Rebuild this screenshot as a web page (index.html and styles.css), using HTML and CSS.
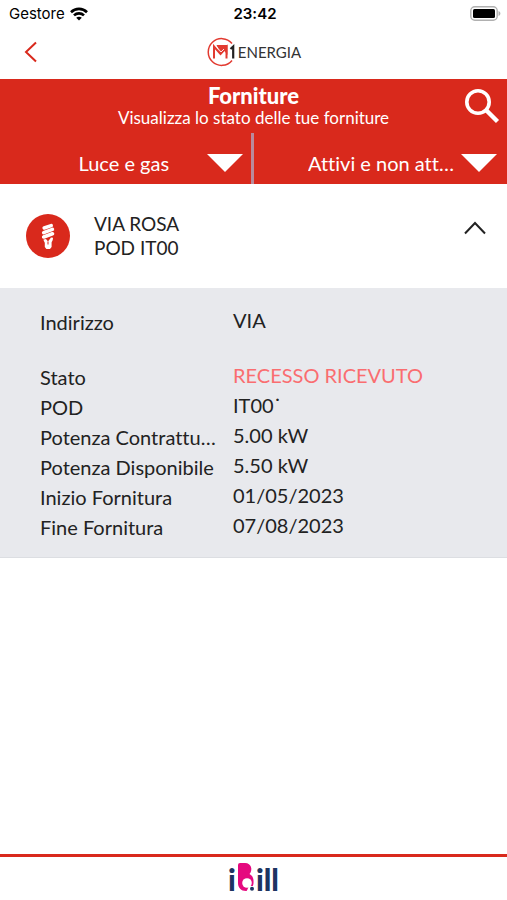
FILE: index.html
```html
<!DOCTYPE html>
<html lang="it">
<head>
    <meta charset="UTF-8">
    <meta name="viewport" content="width=device-width, initial-scale=1.0">
    <title>Forniture</title>
    <link rel="stylesheet" href="styles.css">
</head>
<body>
    <div class="status-bar">
        <div class="carrier">
            <span>Gestore</span>
            <svg width="18" height="14" viewBox="0 0 18 14" fill="none" stroke="#000" stroke-width="2.6">
                <path d="M1 5.2C5.5 0.8 12.5 0.8 17 5.2"/>
                <path d="M4 8.4C6.8 5.7 11.2 5.7 14 8.4"/>
                <path d="M9 13.6L6.2 10.8C7.8 9.4 10.2 9.4 11.8 10.8Z" fill="#000" stroke="none"/>
            </svg>
        </div>
        <div class="clock">23:42</div>
        <div class="battery">
            <svg width="31" height="15" viewBox="0 0 31 15">
                <rect x="0.8" y="0.8" width="26.4" height="13.4" rx="4" fill="#fff" stroke="#b0b0b0" stroke-width="1.4"/>
                <rect x="3" y="3" width="22" height="9" rx="1.5" fill="#000"/>
                <path d="M28.5 5C31 6 31 9 28.5 10Z" fill="#b0b0b0"/>
            </svg>
        </div>
    </div>

    <header class="navbar">
        <button class="back-button" aria-label="Indietro">
            <svg width="14" height="22" viewBox="0 0 14 22" fill="none" stroke="#d9291c" stroke-width="2">
                <path d="M12 1.5L2 11L12 20.5"/>
            </svg>
        </button>
        <div class="brand">
            <svg width="30" height="30" viewBox="0 0 30 30">
                <path d="M26 6.5A13.4 13.4 0 1 0 26 23.5" fill="none" stroke="#e23a30" stroke-width="1.5"/>
                <path d="M8 21.5V9.5L14.5 17L20.5 10V21.5" fill="none" stroke="#e23a30" stroke-width="2"/>
                <path d="M10.5 8H21.5V18L18.5 14L15 17.5Z" fill="#e23a30"/>
                <path d="M9.5 8.5L15 15L18 12" fill="none" stroke="#fff" stroke-width="0.9"/>
                <path d="M24.5 12L27.2 9.5V21.5" fill="none" stroke="#222" stroke-width="2.2"/>
            </svg>
            <span>ENERGIA</span>
        </div>
    </header>

    <section class="page-head">
        <div class="page-title">
            <h1>Forniture</h1>
            <p>Visualizza lo stato delle tue forniture</p>
            <button class="search-button" aria-label="Cerca">
                <svg width="36" height="36" viewBox="0 0 36 36" fill="none" stroke="#fff">
                    <circle cx="14" cy="14" r="11.2" stroke-width="3.6"/>
                    <path d="M22 22L33.5 33.5" stroke-width="4.4"/>
                </svg>
            </button>
        </div>
        <div class="filters">
            <div class="filter">
                <select aria-label="Tipo di fornitura">
                    <option>Luce e gas</option>
                    <option>Luce</option>
                    <option>Gas</option>
                </select>
                <span class="arrow"></span>
            </div>
            <div class="filter">
                <select aria-label="Stato della fornitura">
                    <option>Attivi e non attivi</option>
                    <option>Attivi</option>
                </select>
                <span class="arrow"></span>
            </div>
        </div>
    </section>

    <main>
        <div class="supply">
            <svg width="44" height="44" viewBox="0 0 44 44">
                <circle cx="22" cy="22" r="22" fill="#d9291c"/>
                <g stroke="#fff" stroke-width="3.6" stroke-linecap="round">
                    <path d="M18.2 14L25.2 11.6"/>
                    <path d="M17.7 18.6L26.4 15.4"/>
                    <path d="M17.7 23L26.4 19.8"/>
                </g>
                <path d="M17.5 25.5L20 25L22 27.5L25 23.6L27 23.8C27 27 25.6 27.5 25.6 29V33L24 35H20.4L18.8 33V29C18.8 28 17.5 27 17.5 25.5Z" fill="#fff"/>
                <path d="M22 27.5V30.5" stroke="#d9291c" stroke-width="1"/>
            </svg>
            <div class="supply-name">
                <div>VIA ROSA</div>
                <div>POD IT00</div>
            </div>
            <button class="toggle-button" aria-label="Chiudi dettagli" aria-expanded="true">
                <svg width="22" height="14" viewBox="0 0 22 14" fill="none" stroke="#222" stroke-width="2">
                    <path d="M1 12.5L11 2L21 12.5"/>
                </svg>
            </button>
        </div>

        <table class="details">
            <tr class="address"><th scope="row">Indirizzo</th><td>VIA</td></tr>
            <tr><th scope="row">Stato</th><td class="withdrawn">RECESSO RICEVUTO</td></tr>
            <tr><th scope="row">POD</th><td>IT00˙</td></tr>
            <tr><th scope="row">Potenza Contrattuale</th><td>5.00 kW</td></tr>
            <tr><th scope="row">Potenza Disponibile</th><td>5.50 kW</td></tr>
            <tr><th scope="row">Inizio Fornitura</th><td>01/05/2023</td></tr>
            <tr><th scope="row">Fine Fornitura</th><td>07/08/2023</td></tr>
        </table>
    </main>

    <footer class="footer">
        <div class="ibill">
            <span>i</span>
            <svg width="18" height="29" viewBox="0 0 18 29">
                <path d="M1 2Q1 0 3 0H8C14.5 0 16 7 12.5 11C15.5 12.5 17 15.5 16.5 20.5C16 25 13 28 9 28C4 28 1 24.5 1 20Z" fill="#e5097f"/>
                <circle cx="10" cy="20" r="4.8" fill="#fff"/>
                <path d="M9.5 28.5L12 23H18V29Z" fill="#fff"/>
                <circle cx="15" cy="25.8" r="2" fill="#1d3461"/>
            </svg>
            <span>ill</span>
        </div>
    </footer>
</body>
</html>
```
FILE: styles.css
```css
* {
    box-sizing: border-box;
}

body {
    margin: 0;
    min-height: 100vh;
    display: flex;
    flex-direction: column;
    background: #fff;
    color: #222;
    font-family: Lato, sans-serif;
    font-size: 20px;
    font-variant-ligatures: none;
}

button {
    display: flex;
    padding: 0;
    border: none;
    background: transparent;
    cursor: pointer;
}

.status-bar {
    display: grid;
    grid-template-columns: 1fr auto 1fr;
    align-items: center;
    height: 27px;
    padding: 0 6px 0 9px;
    color: #000;
    font-family: Inter, sans-serif;
    font-size: 15px;
}

.carrier {
    display: flex;
    align-items: center;
    gap: 5px;
}

.clock {
    font-weight: 600;
}

.battery {
    display: flex;
    justify-content: flex-end;
}

.navbar {
    display: grid;
    grid-template-columns: 1fr auto 1fr;
    align-items: center;
    height: 52px;
    padding: 0 24px 2px;
}

.brand {
    display: flex;
    align-items: center;
    gap: 2px;
    color: #333;
    font-size: 15px;
}

.page-head {
    background: #d9291c;
    color: #fff;
}

.page-title {
    position: relative;
    padding: 5px 48px;
    text-align: center;
}

.page-title h1 {
    margin: 0;
    font-size: 22px;
    font-weight: 900;
    line-height: 24px;
}

.page-title p {
    margin: 0;
    font-size: 17px;
    line-height: 20px;
}

.search-button {
    position: absolute;
    top: 9px;
    right: 7px;
}

.filters {
    display: grid;
    grid-template-columns: 1fr 1fr;
    height: 51px;
}

.filter {
    display: flex;
    align-items: center;
    justify-content: flex-end;
    gap: 4px;
    padding: 8px 10px 0 48px;
}

.filter:first-child {
    padding-right: 8px;
    border-right: 3px solid #b98a9c;
}

.filter select {
    width: 149px;
    margin: 0;
    padding: 0;
    border: none;
    appearance: none;
    background: transparent;
    color: #fff;
    font: inherit;
    text-overflow: ellipsis;
    cursor: pointer;
}

.filter:first-child select {
    width: 124px;
}

.arrow {
    border: 18px solid transparent;
    border-top-color: #fff;
    border-bottom: none;
}

.supply {
    display: flex;
    align-items: center;
    height: 104px;
    padding: 0 21px 0 26px;
}

.supply-name {
    flex: 1;
    margin-left: 24px;
    font-size: 19px;
    line-height: 24px;
}

.toggle-button {
    margin-bottom: 16px;
}

.details {
    width: 100%;
    padding: 18px 24px 16px 40px;
    border-bottom: 1px solid #dcdee2;
    border-spacing: 0;
    table-layout: fixed;
    background: #e8e9ed;
}

.details th,
.details td {
    height: 30px;
    padding: 0;
    line-height: 28px;
    vertical-align: top;
}

.details th {
    width: 193px;
    padding: 2px 12px 0 0;
    overflow: hidden;
    font-weight: 400;
    text-align: left;
    text-overflow: ellipsis;
    white-space: nowrap;
}

.details .address th,
.details .address td {
    height: 55px;
}

.details .withdrawn {
    color: #fa6d70;
}

.footer {
    display: flex;
    justify-content: center;
    height: 46px;
    margin-top: auto;
    padding-top: 6px;
    border-top: 3px solid #d9291c;
}

.ibill {
    display: flex;
    gap: 1px;
    color: #1d3461;
    font-size: 30px;
    font-weight: 900;
    line-height: 32px;
}
```
